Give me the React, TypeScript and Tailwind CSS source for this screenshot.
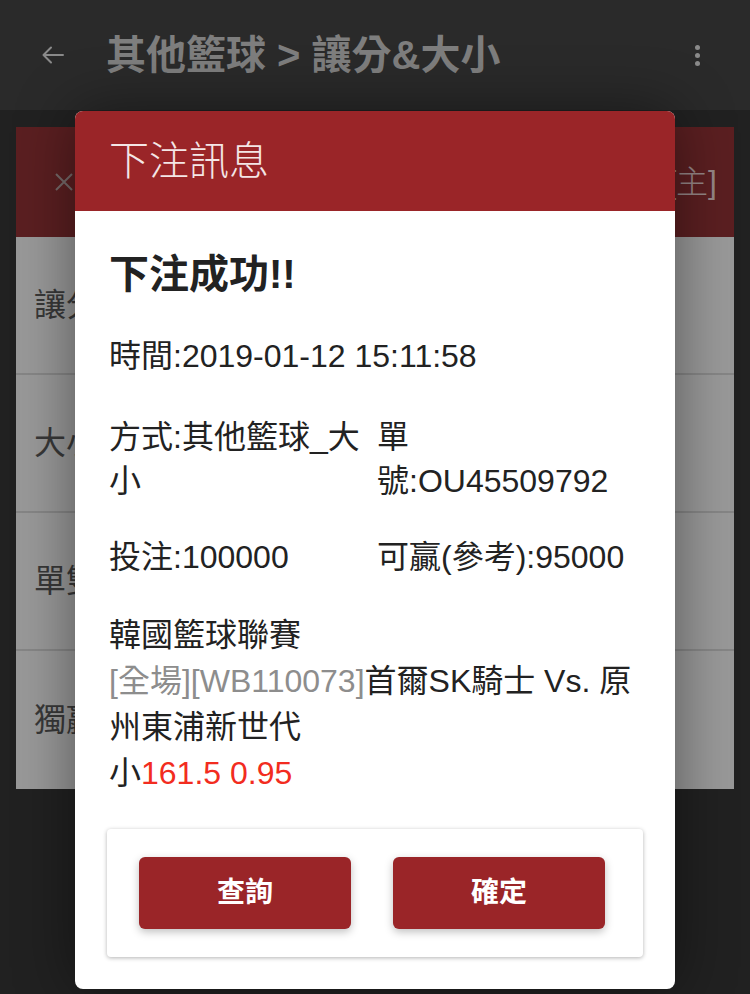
import React from "react";

const rows = ["讓分", "大小", "單雙", "獨贏"];

export default function App() {
  return (
    <div className="relative w-[750px] h-[994px] overflow-hidden bg-[#212121] font-['Liberation_Sans','Noto_Sans_CJK_TC',sans-serif]">
      {/* top bar */}
      <header className="h-[110px] bg-[#2a2a2a] flex items-center">
        <div className="w-[106px] pl-[41px] flex items-center">
          <svg width="24" height="24" viewBox="0 0 24 24" fill="none" stroke="#8a8a8a" strokeWidth="2" strokeLinecap="round" strokeLinejoin="round">
            <path d="M22 12H2.5M10 4.5 2.5 12l7.5 7.5" />
          </svg>
        </div>
        <h1 className="flex-1 text-[40px] leading-[48px] font-semibold text-[#7e7e7e] whitespace-nowrap">
          其他籃球 &gt; 讓分&amp;大小
        </h1>
        <div className="w-[104px] flex flex-col items-center gap-[3px] pr-[2px]">
          <span className="w-[5px] h-[5px] rounded-full bg-[#8a8a8a]" />
          <span className="w-[5px] h-[5px] rounded-full bg-[#8a8a8a]" />
          <span className="w-[5px] h-[5px] rounded-full bg-[#8a8a8a]" />
        </div>
      </header>

      {/* background panel */}
      <div className="mx-[16px] mt-[17px]">
        <div className="h-[110px] bg-[#5b1f21] flex items-center justify-between pl-[39px] pr-[17px]">
          <svg width="18" height="18" viewBox="0 0 18 18" stroke="#766a6a" strokeWidth="2">
            <path d="M1 1l16 16M17 1 1 17" />
          </svg>
          <span className="text-[32px] font-light text-[#958686]">[主]</span>
        </div>
        {rows.map((r, i) => (
          <div
            key={r}
            className={`h-[138px] bg-[#999999] flex items-center pl-[18px] text-[32px] text-[#383838] ${i < rows.length - 1 ? "border-b-2 border-[#868686]" : ""}`}
          >
            {r}
          </div>
        ))}
      </div>

      {/* dialog */}
      <div className="absolute left-[75px] top-[111px] w-[600px] rounded-[8px] bg-white overflow-hidden shadow-[0_0_60px_rgba(0,0,0,0.45)]">
        <div className="h-[100px] bg-[#9a2528] flex items-center pl-[34px]">
          <span className="text-[40px] font-light text-[#f4e6e6] leading-none">下注訊息</span>
        </div>
        <div className="px-[34px] pt-[39px] text-[32px] text-[#222222]">
          <div className="text-[40px] leading-[48px] font-bold">下注成功!!</div>
          <div className="mt-[36px] leading-[44px]">時間:2019-01-12 15:11:58</div>
          <div className="mt-[37px] grid grid-cols-[268px_250px] leading-[44px]">
            <div>方式:其他籃球_大小</div>
            <div>單號:OU45509792</div>
          </div>
          <div className="mt-[32px] grid grid-cols-[268px_250px] leading-[44px] whitespace-nowrap">
            <div>投注:100000</div>
            <div>可贏(參考):95000</div>
          </div>
          <div className="mt-[33px] leading-[46px]">
            <div>韓國籃球聯賽</div>
            <div>
              <span className="text-[#8d8d8d]">[全場][WB110073]</span>首爾SK騎士 Vs. 原州東浦新世代
            </div>
            <div>
              小<span className="text-[#f22c20]">161.5 0.95</span>
            </div>
          </div>
        </div>
        <div className="px-[32px] pt-[33px] pb-[32px]">
          <div className="rounded-[4px] bg-white shadow-[0_1px_4px_rgba(0,0,0,0.3)] flex gap-[42px] pl-[32px] py-[28px]">
            <button className="w-[212px] h-[72px] rounded-[6px] bg-[#9a2528] text-white text-[28px] font-semibold shadow-[0_3px_8px_rgba(0,0,0,0.25)]">
              查詢
            </button>
            <button className="w-[212px] h-[72px] rounded-[6px] bg-[#9a2528] text-white text-[28px] font-semibold shadow-[0_3px_8px_rgba(0,0,0,0.25)]">
              確定
            </button>
          </div>
        </div>
      </div>
    </div>
  );
}
